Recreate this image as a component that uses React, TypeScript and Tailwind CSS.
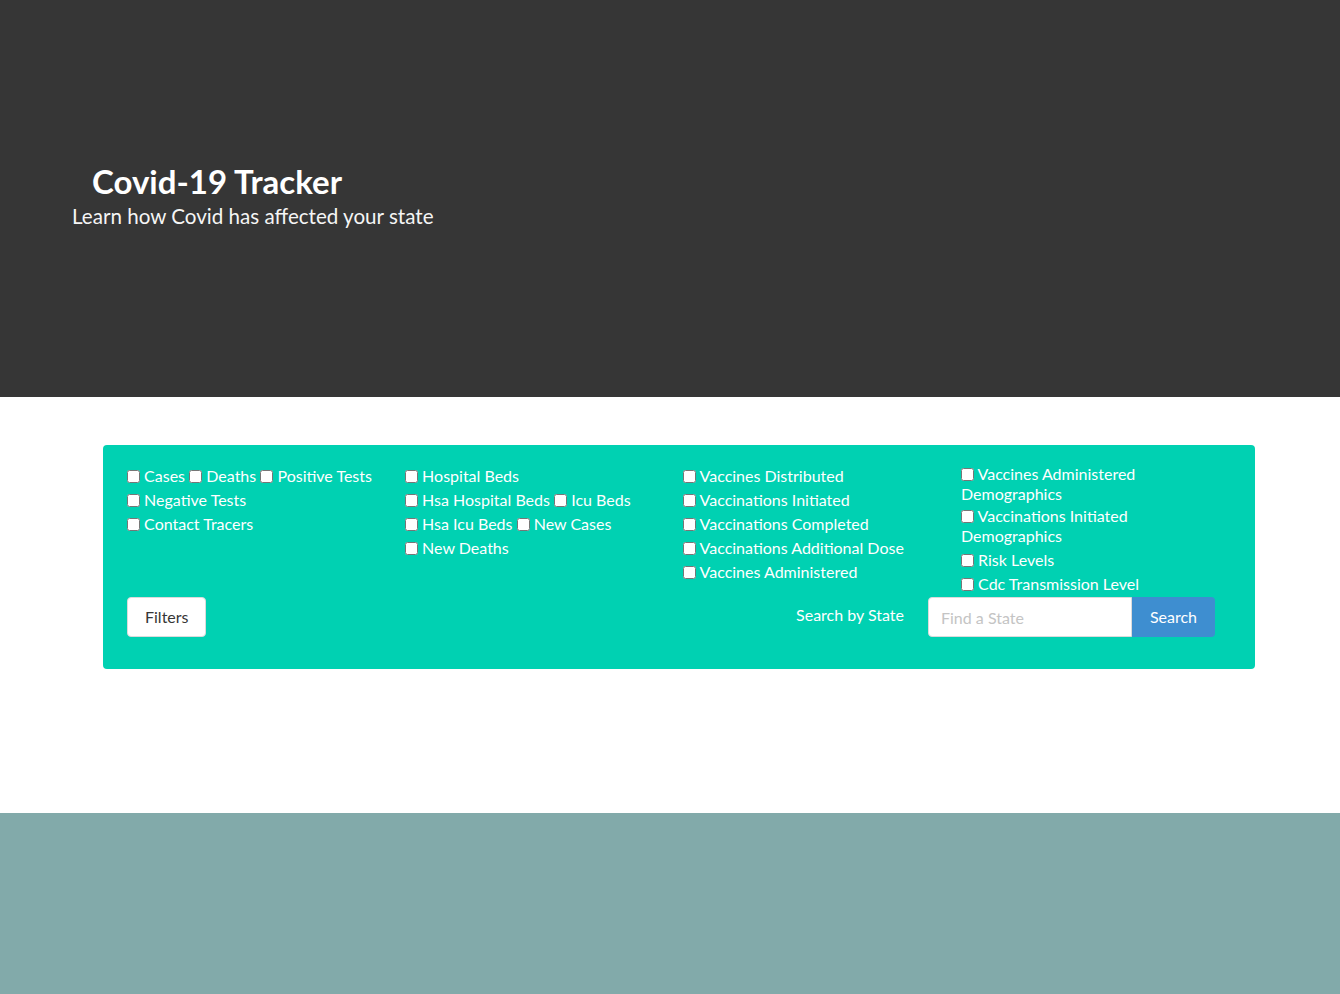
import React from 'react';

// each inner array is one line of the column
const columns: string[][][] = [
  [['Cases', 'Deaths', 'Positive Tests'], ['Negative Tests'], ['Contact Tracers']],
  [['Hospital Beds'], ['Hsa Hospital Beds', 'Icu Beds'], ['Hsa Icu Beds', 'New Cases'], ['New Deaths']],
  [
    ['Vaccines Distributed'],
    ['Vaccinations Initiated'],
    ['Vaccinations Completed'],
    ['Vaccinations Additional Dose'],
    ['Vaccines Administered'],
  ],
];

function Box() {
  return <input type="checkbox" className="w-[13px] h-[13px] align-[-1px]" />;
}

function Check({ label }: { label: string }) {
  return (
    <>
      <label className="cursor-pointer whitespace-nowrap">
        <Box /> {label}
      </label>{' '}
    </>
  );
}

export default function App() {
  return (
    <div className="font-['Lato',sans-serif] text-base">
      {/* Hero */}
      <section className="bg-[#363636] h-[397px] flex flex-col justify-center px-[72px] pb-[7px]">
        <h1 className="pl-5 text-[33px] leading-10 font-bold text-white">Covid-19 Tracker</h1>
        <h2 className="text-[20.6px] leading-7 text-[#f5f5f5] mt-[1px]">
          Learn how Covid has affected your state
        </h2>
      </section>

      {/* Filters */}
      <section className="bg-white h-[416px] pt-12 pl-[103px]">
        <div className="w-[1152px] bg-[#00d1b2] rounded text-white pl-6 pr-10 pt-[19px] pb-8">
          <div className="grid grid-cols-4 gap-6">
            {columns.map((lines, i) => (
              <div key={i} className="leading-6">
                {lines.map((line) => (
                  <div key={line.join()}>
                    {line.map((item) => (
                      <Check key={item} label={item} />
                    ))}
                  </div>
                ))}
              </div>
            ))}
            <div className="leading-5">
              <label className="block">
                <Box /> Vaccines Administered Demographics
              </label>
              <label className="block mt-[2px]">
                <Box /> Vaccinations Initiated Demographics
              </label>
              <label className="block mt-1">
                <Box /> Risk Levels
              </label>
              <label className="block mt-1">
                <Box /> Cdc Transmission Level
              </label>
            </div>
          </div>

          <div className="flex items-center justify-between mt-[3px]">
            <button className="h-10 px-[17px] bg-white border border-[#dbdbdb] rounded text-[#363636]">
              Filters
            </button>
            <div className="flex items-center">
              <span className="mr-6 -mt-1">Search by State</span>
              <input
                type="text"
                placeholder="Find a State"
                className="h-10 w-[204px] px-3 bg-white border border-[#dbdbdb] rounded-l text-[#363636] placeholder:text-[#c4c4c4] outline-none"
              />
              <button className="h-10 w-[83px] bg-[#3e8ed0] rounded-r text-white">Search</button>
            </div>
          </div>
        </div>
      </section>

      {/* Footer */}
      <footer className="bg-[#82aaaa] h-[181px]" />
    </div>
  );
}
